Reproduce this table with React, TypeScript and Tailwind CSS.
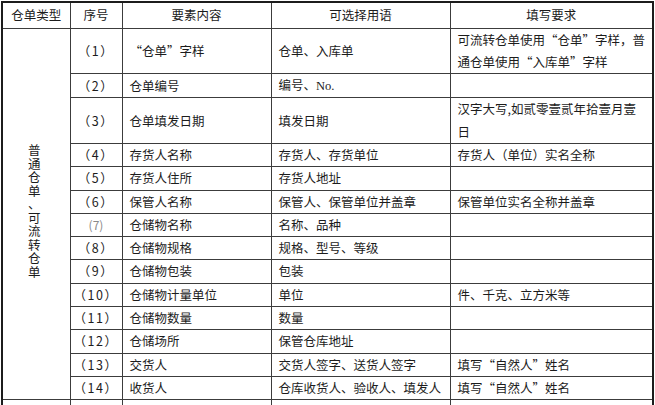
import type { ReactNode } from "react"

// 仓单要素表 — 普通仓单、可流转仓单
type Row = {
  no: ReactNode
  item: ReactNode
  terms: ReactNode
  req?: ReactNode
}

const rows: Row[] = [
  {
    no: "（1）",
    item: "“仓单”字样",
    terms: "仓单、入库单",
    req: (
      <>
        可流转仓单使用“仓单”字样，普
        <br />
        通仓单使用“入库单”字样
      </>
    ),
  },
  {
    no: "（2）",
    item: "仓单编号",
    terms: (
      <>
        编号、<span className="font-['Liberation_Serif',serif]">No.</span>
      </>
    ),
  },
  {
    no: "（3）",
    item: "仓单填发日期",
    terms: "填发日期",
    req: (
      <>
        汉字大写,如贰零壹贰年拾壹月壹
        <br />日
      </>
    ),
  },
  { no: "（4）", item: "存货人名称", terms: "存货人、存货单位", req: "存货人（单位）实名全称" },
  { no: "（5）", item: "存货人住所", terms: "存货人地址" },
  { no: "（6）", item: "保管人名称", terms: "保管人、保管单位并盖章", req: "保管单位实名全称并盖章" },
  {
    no: <span className="text-[12px] tracking-normal text-[#8a8a8a]">(7)</span>,
    item: "仓储物名称",
    terms: "名称、品种",
  },
  { no: "（8）", item: "仓储物规格", terms: "规格、型号、等级" },
  { no: "（9）", item: "仓储物包装", terms: "包装" },
  { no: "（10）", item: "仓储物计量单位", terms: "单位", req: "件、千克、立方米等" },
  { no: "（11）", item: "仓储物数量", terms: "数量" },
  { no: "（12）", item: "仓储场所", terms: "保管仓库地址" },
  { no: "（13）", item: "交货人", terms: "交货人签字、送货人签字", req: "填写“自然人”姓名" },
  { no: "（14）", item: "收货人", terms: "仓库收货人、验收人、填发人", req: "填写“自然人”姓名" },
]

const cell = "border border-[#3c3c3c] p-0 align-middle whitespace-nowrap overflow-hidden"

export default function App() {
  return (
    <div className="h-[405px] w-[655px] overflow-hidden bg-white font-['Noto_Sans_CJK_SC',sans-serif] text-[12.5px] leading-[22.3px] text-[#1c1c1c]">
      <table className="ml-px mt-px w-[651px] table-fixed border-collapse">
        <colgroup>
          <col className="w-[68px]" />
          <col className="w-[52px]" />
          <col className="w-[149px]" />
          <col className="w-[179px]" />
          <col className="w-[203px]" />
        </colgroup>
        <thead>
          <tr className="h-[26px]">
            <th className={`${cell} border-t-2 border-l-2 border-t-[#1c1c1c] border-l-[#1c1c1c] font-normal`}>仓单类型</th>
            <th className={`${cell} border-t-2 border-t-[#1c1c1c] font-normal`}>序号</th>
            <th className={`${cell} border-t-2 border-t-[#1c1c1c] font-normal`}>要素内容</th>
            <th className={`${cell} border-t-2 border-t-[#1c1c1c] font-normal`}>可选择用语</th>
            <th className={`${cell} border-t-2 border-r-2 border-t-[#1c1c1c] border-r-[#1c1c1c] font-normal`}>填写要求</th>
          </tr>
        </thead>
        <tbody>
          {rows.map((r, i) => (
            <tr key={i}>
              {i === 0 && (
                <td rowSpan={rows.length} className={`${cell} border-l-2 border-l-[#1c1c1c]`}>
                  {/* 竖排：逐字换行 */}
                  <div className="mx-auto flex w-[13px] -translate-x-[2px] -translate-y-[3px] flex-col items-center leading-[13.5px]">
                    {"普通仓单、可流转仓单".split("").map((c, k) => (
                      <span key={k}>{c}</span>
                    ))}
                  </div>
                </td>
              )}
              <td className={`${cell} text-center tracking-[1.5px]`}>{r.no}</td>
              <td className={`${cell} pl-[7px]`}>{r.item}</td>
              <td className={`${cell} pl-[7px]`}>{r.terms}</td>
              <td className={`${cell} border-r-2 border-r-[#1c1c1c] pl-[7px]`}>{r.req}</td>
            </tr>
          ))}
          <tr className="h-[24px]">
            <td className={`${cell} border-l-2 border-l-[#1c1c1c]`} />
            <td className={cell} />
            <td className={cell} />
            <td className={cell} />
            <td className={`${cell} border-r-2 border-r-[#1c1c1c]`} />
          </tr>
        </tbody>
      </table>
    </div>
  )
}
